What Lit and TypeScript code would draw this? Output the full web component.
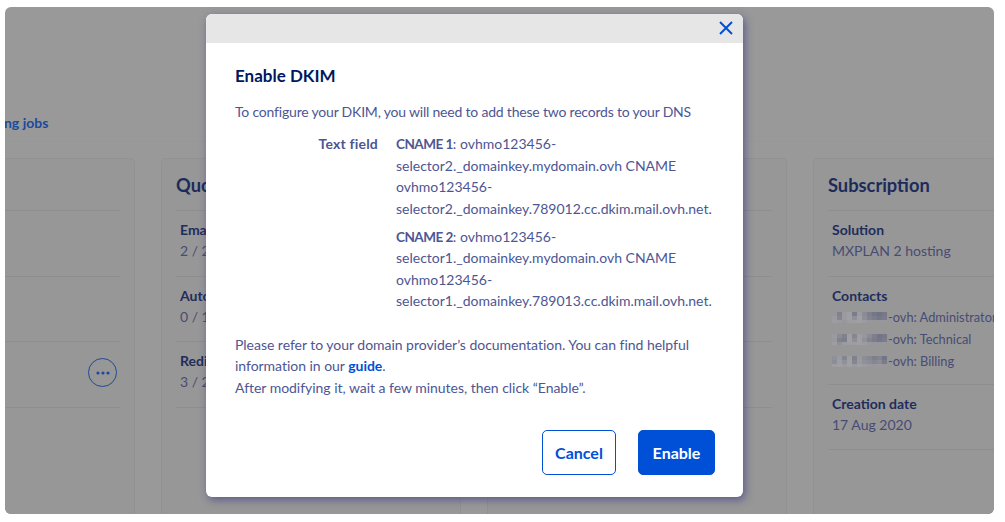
import { LitElement, html, css } from "lit";
import { customElement } from "lit/decorators.js";

const MOSAICS = [
  [
    "#96969c", "#7f818f", "#9a9aa0", "#a0a0a4", "#7a7c8c", "#9c9ca0", "#8a8b96", "#7d7f8e", "#74768a", "#70728a", "#777989",
    "#9a9a9f", "#85868f", "#9a9aa0", "#a0a0a4", "#8f9098", "#a0a0a4", "#8d8e98", "#82838f", "#7b7d8c", "#74768a", "#7a7c8c",
    "#9e9ea2", "#9a9a9f", "#98989c", "#9e9ea2", "#9e9ea2", "#a0a0a4", "#9c9ca0", "#98989c", "#96969b", "#96969b", "#98989c",
  ],
  [
    "#9a9a9f", "#8b8c96", "#7f818f", "#a0a0a4", "#85868f", "#9e9ea2", "#96989e", "#8a8b96", "#7d7f8e", "#72748a", "#777989",
    "#98989d", "#80828f", "#7c7e8d", "#a0a0a4", "#8d8e98", "#a0a0a4", "#8f9098", "#82838f", "#7b7d8c", "#74768a", "#7a7c8c",
    "#9e9ea2", "#909198", "#9a9a9f", "#9e9ea2", "#9e9ea2", "#a0a0a4", "#9c9ca0", "#98989c", "#96969b", "#96969b", "#98989c",
  ],
  [
    "#8f9098", "#9a9a9f", "#83858f", "#9e9ea2", "#7f818f", "#98989d", "#8c8d96", "#868792", "#7d7f8e", "#84858f", "#72748a",
    "#8c8d96", "#9e9ea2", "#8f9098", "#a0a0a4", "#83858f", "#9a9a9f", "#909198", "#8b8c96", "#85868f", "#8b8c96", "#7a7c8c",
    "#9e9ea2", "#a0a0a4", "#9a9a9f", "#a0a0a4", "#9a9a9f", "#a0a0a4", "#9c9ca0", "#98989d", "#98989c", "#98989d", "#98989c",
  ],
];

@customElement("app-root")
export class AppRoot extends LitElement {
  static styles = css`
    :host { display: block; height: 522px; background: #fff; font-family: "Lato", "Noto Sans", sans-serif; overflow: hidden; }
    .window { position: relative; box-sizing: border-box; margin: 7px 11px 8px 5px; height: 507px; background: #999; border-radius: 6px; overflow: hidden; }
    .page { box-sizing: border-box; width: 1300px; margin-left: -170px; height: 100%; }
    .tabs { box-sizing: border-box; height: 135px; border-bottom: 1px solid #919a96; padding: 107px 0 0 131px; font-size: 14px; line-height: 18px; font-weight: 700; color: #1c4a9c; margin-bottom: 16px; }
    .cards { display: flex; gap: 26px; align-items: flex-start; }
    .card { box-sizing: border-box; width: 300px; height: 360px; padding: 0 14px; background: #979797; border: 1px solid #919191; border-radius: 5px; flex: none; }
    .card h3 { margin: 0; height: 52px; box-sizing: border-box; padding-top: 15px; font-size: 18.3px; line-height: 22px; font-weight: 700; color: #1d2b5b; border-bottom: 1px solid #8e8e8e; }
    .row { box-sizing: border-box; border-bottom: 1px solid #8e8e8e; padding: 8px 4px 0; height: 65.7px; position: relative; font-size: 14px; line-height: 21px; color: #474c75; }
    .row.wide { height: 108px; }
    .row.wide b { margin-bottom: 1px; }
    .row b { display: block; color: #1f2d5c; font-weight: 700; line-height: 21px; }
    .row small { display: flex; align-items: center; font-size: 12.8px; height: 22px; white-space: nowrap; }
    .mosaic { display: inline-grid; grid-template-columns: repeat(11, 5px); grid-template-rows: 4px 4px 3px; margin-right: 1px; }
    .more { box-sizing: border-box; position: absolute; right: 3px; top: 16px; width: 29px; height: 29px; border: 1px solid #1c4a9c; border-radius: 50%; display: flex; align-items: center; justify-content: center; }
    .modal { position: absolute; left: 201px; top: 7px; width: 537px; height: 483px; background: #fff; border-radius: 6px; box-shadow: 2px 3px 8px rgba(40,40,130,.55); color: #4d5693; font-size: 14px; line-height: 21.5px; overflow: hidden; }
    .modal-head { box-sizing: border-box; height: 29px; background: #e6e6e6; display: flex; justify-content: flex-end; align-items: center; padding: 0 10px 2px 0; }
    .modal-head svg { display: block; }
    .modal-body { padding: 21px 28px 0 29px; }
    h2 { margin: 0 0 12.5px; font-size: 17px; line-height: 24px; font-weight: 700; color: #00185e; }
    p { margin: 0; white-space: nowrap; }
    .intro { letter-spacing: -0.2px; }
    .field { display: grid; grid-template-columns: 143px 1fr; column-gap: 18px; margin-top: 11px; white-space: nowrap; }
    .field .label { font-weight: 700; text-align: right; letter-spacing: 0.2px; }
    .field .value b { font-size: 13.5px; line-height: 1; letter-spacing: -0.5px; }
    .field .value p + p { margin-top: 6.5px; }
    .note { margin-top: 22px; letter-spacing: -0.03px; }
    a { color: #0050d7; font-weight: 700; text-decoration: none; }
    .actions { display: flex; justify-content: flex-end; gap: 22px; margin-top: 32px; }
    button { box-sizing: border-box; height: 45px; border-radius: 5px; font: 700 16px "Lato", "Noto Sans", sans-serif; border: 1px solid #0050d7; padding: 0; }
    .cancel { width: 74px; background: #fff; color: #0050d7; }
    .enable { width: 77px; background: #0050d7; color: #fff; }
  `;

  private mosaic(n: number) {
    return html`<span class="mosaic">${MOSAICS[n].map((c) => html`<i style="background:${c}"></i>`)}</span>`;
  }

  render() {
    return html`
      <div class="window">
        <div class="page">
          <div class="tabs">Ongoing jobs</div>
          <div class="cards">
            <section class="card">
              <h3>&nbsp;</h3>
              <div class="row"></div>
              <div class="row"></div>
              <div class="row">
                <span class="more">
                  <svg width="14" height="4" viewBox="0 0 14 4" fill="#1c4a9c"><circle cx="2" cy="2" r="1.6"/><circle cx="7" cy="2" r="1.6"/><circle cx="12" cy="2" r="1.6"/></svg>
                </span>
              </div>
            </section>
            <section class="card">
              <h3>Quotas</h3>
              <div class="row"><b>Email accounts</b>2 / 2</div>
              <div class="row"><b>Auto-replies</b>0 / 10</div>
              <div class="row"><b>Redirections</b>3 / 20</div>
            </section>
            <section class="card">
              <h3>&nbsp;</h3>
              <div class="row"></div>
              <div class="row"></div>
              <div class="row"></div>
            </section>
            <section class="card">
              <h3>Subscription</h3>
              <div class="row"><b>Solution</b>MXPLAN 2 hosting</div>
              <div class="row wide">
                <b>Contacts</b>
                <small>${this.mosaic(0)}-ovh: Administrator</small>
                <small>${this.mosaic(1)}-ovh: Technical</small>
                <small>${this.mosaic(2)}-ovh: Billing</small>
              </div>
              <div class="row"><b>Creation date</b>17 Aug 2020</div>
            </section>
          </div>
        </div>
        <div class="modal" role="dialog">
          <div class="modal-head">
            <svg width="14" height="14" viewBox="0 0 14 14" fill="none" stroke="#0050d7" stroke-width="2"><path d="M1 1l12 12M13 1L1 13"/></svg>
          </div>
          <div class="modal-body">
            <h2>Enable DKIM</h2>
            <p class="intro">To configure your DKIM, you will need to add these two records to your DNS</p>
            <div class="field">
              <div class="label">Text field</div>
              <div class="value">
                <p><b>CNAME 1</b>: ovhmo123456-<br>selector2._domainkey.mydomain.ovh CNAME<br>ovhmo123456-<br>selector2._domainkey.789012.cc.dkim.mail.ovh.net.</p>
                <p><b>CNAME 2</b>: ovhmo123456-<br>selector1._domainkey.mydomain.ovh CNAME<br>ovhmo123456-<br>selector1._domainkey.789013.cc.dkim.mail.ovh.net.</p>
              </div>
            </div>
            <p class="note">Please refer to your domain provider’s documentation. You can find helpful<br>information in our <a href="#">guide</a>.<br>After modifying it, wait a few minutes, then click “Enable”.</p>
            <div class="actions">
              <button class="cancel">Cancel</button>
              <button class="enable">Enable</button>
            </div>
          </div>
        </div>
      </div>
    `;
  }
}
